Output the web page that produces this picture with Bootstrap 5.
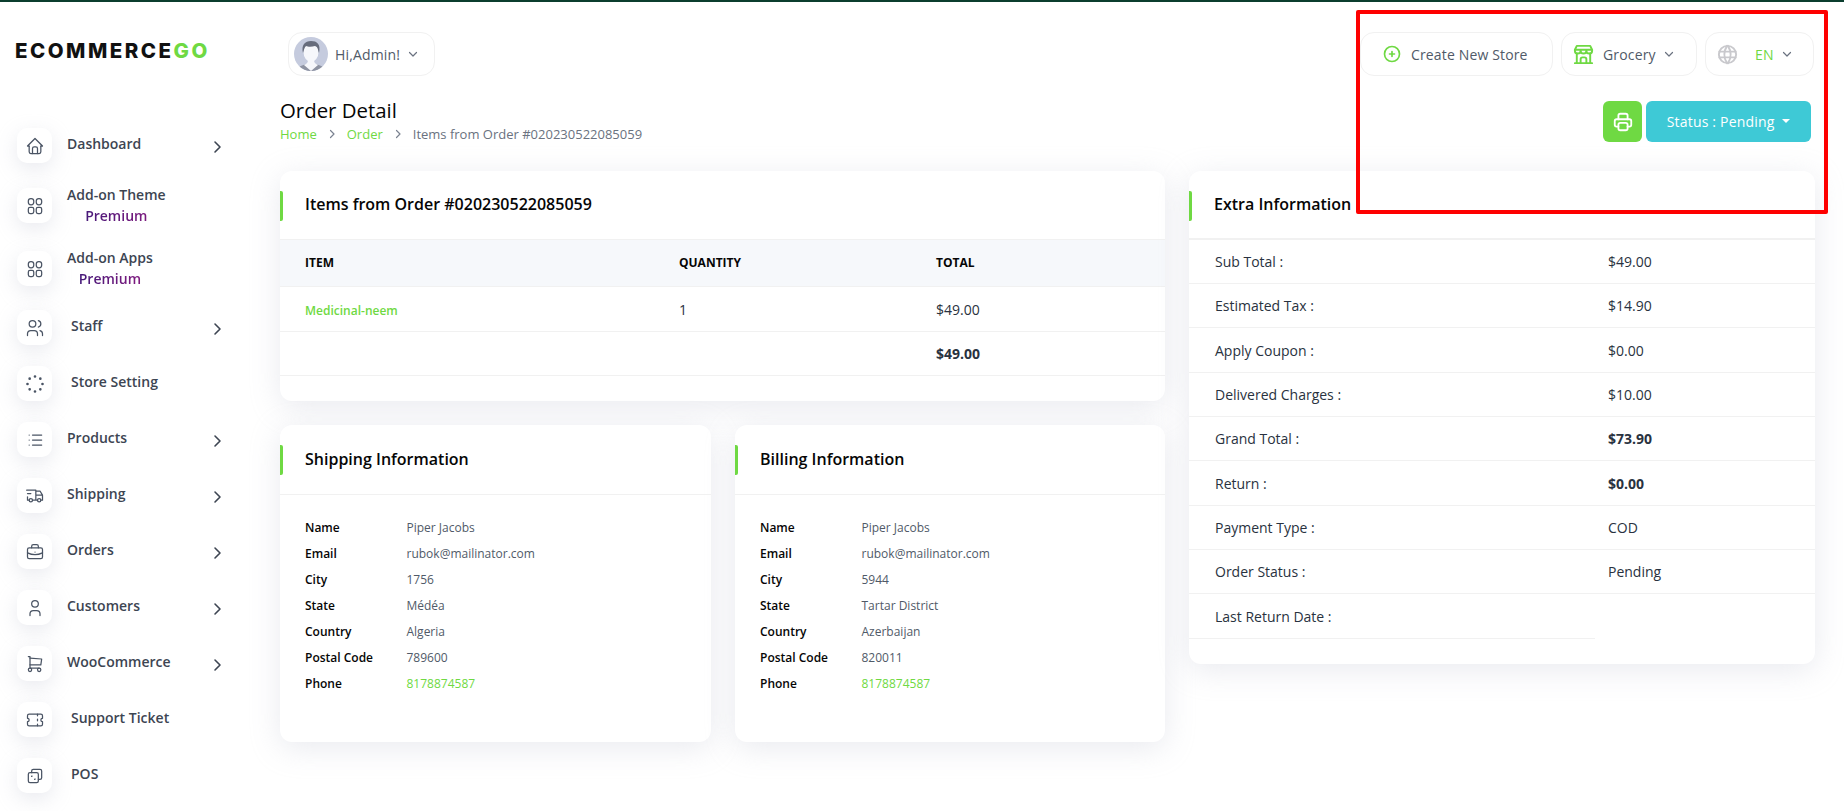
<!doctype html>
<html lang="en">
<head>
<meta charset="utf-8">
<title>Order Detail</title>
<link href="https://cdn.jsdelivr.net/npm/bootstrap@5.3.0/dist/css/bootstrap.min.css" rel="stylesheet">
<style>
html,body{height:811px;overflow:hidden}
body{font-family:"Open Sans",sans-serif;font-size:14px;color:#293240;background:#fff;border-top:2px solid #0b3d2e;position:relative}
svg.ic{fill:none;stroke:currentColor;stroke-width:2;stroke-linecap:round;stroke-linejoin:round;flex:none}
.shell{height:809px}
.side{width:280px;flex:none}
.brand{height:126px;padding:37px 0 0 15px}
.brandtxt{font-family:"Inter",sans-serif;font-weight:800;font-size:20.5px;letter-spacing:2.5px;line-height:24px;color:#111;white-space:nowrap}
.brandtxt b{color:#6fd943;font-weight:800}
.sitem{display:flex;align-items:flex-start;padding-left:17px;color:#3d4552;font-weight:600;font-size:14px;text-decoration:none;height:56px;position:relative}
.sitem.tall1{height:60px}.sitem.tall2{height:59px}
.sitem.tall3{height:63px}
.sicon{width:35px;height:35px;border-radius:10px;background:#fff;box-shadow:0 6px 20px rgba(182,186,203,.3);display:flex;align-items:center;justify-content:center;flex:none;color:#4a5464}
.sicon svg.ic{width:20px;height:20px;stroke-width:1.5}
.sicon svg.ic.dots{stroke-width:3.2}
.slabel{margin-left:15px;line-height:21px;margin-top:5px}
.slabel.mid{margin-left:19px}
.slabel.two{text-align:center;margin-top:-4px}
.prem{display:block;line-height:21px;background:linear-gradient(90deg,#3a1a78,#8a1a80);-webkit-background-clip:text;background-clip:text;color:transparent}
svg.ic.chev{position:absolute;left:212px;top:12px;width:10px;height:14px;color:#3d4552;stroke-width:1.6}
.main{flex:1;min-width:0;padding:30px 29px 0 0}
.pill{height:44px;border:1px solid #f1f1f1;border-radius:14px;background:#fff;display:flex;align-items:center;color:#505a68;font-size:14px;letter-spacing:.15px;text-decoration:none}
.userpill{width:147px;margin-left:8px;padding-left:5px}
.avatar{width:34px;height:34px;flex:none}
.hi{margin-left:7px}
.storepill{width:193px;padding-left:21px}
.grocpill{width:136px;padding-left:10px}
.langpill{width:109px;padding-left:10px}
svg.ic.chevd{width:10px;height:10px;color:#6a7280;stroke-width:1.2}
.rtop{gap:8px;margin-right:1px}
.head2{height:96px;margin-top:-1px;position:relative}
.title{font-size:20.4px;font-weight:500;color:#060606;line-height:27px;margin:0;padding-top:22px}
.crumbs{font-size:13px;line-height:18px;color:#6a7280;margin-top:1px;display:flex;align-items:center}
.crumbs a{color:#6fd943;text-decoration:none}
.crumbs svg.ic{width:10px;height:10px;margin:0 10px;color:#7a8290;stroke-width:1.2}
.btnrow{gap:4px;margin-top:26px}
.bprint{width:39px;height:41px;background:#6fd943;color:#fff;border:0;border-radius:6px;padding:0;display:flex;align-items:center;justify-content:center}
.bprint svg.ic{width:22px;height:22px}
.bstatus{width:165px;height:41px;background:#3ec9d6;color:#fff;border:0;border-radius:6px;font-size:14px;font-weight:500;letter-spacing:.2px;padding:0}
.bstatus::after{margin-left:.55em}
.panel{background:#fff;border:0;border-radius:12px;box-shadow:0 6px 30px rgba(182,186,203,.3)}
.phead{position:relative;padding:0 25px;height:69px;display:flex;align-items:center;border-bottom:1px solid #f1f1f1}
.phead::before{content:"";position:absolute;left:0;top:20px;width:3px;height:30px;background:#6fd943;border-radius:0 2px 2px 0}
.phead h5{font-size:16px;font-weight:600;margin:0;color:#060606}
.thead{display:grid;grid-template-columns:374px 257px 1fr;padding-left:25px;height:47px;align-items:center;background:#f6f8fb;border-bottom:1px solid #f1f1f1;font-size:12px;font-weight:700;color:#060606;text-transform:uppercase}
.trow{display:grid;grid-template-columns:374px 257px 1fr;padding-left:25px;align-items:center;height:45px;border-bottom:1px solid #f1f1f1}
.trow.shorter{height:44px}
.tname{color:#6fd943;font-size:12px;font-weight:600;padding-top:3px}
.tcell{font-size:14px}
.first{width:885px;height:230px}
.addr{width:431px;height:317px}
.addr.billing{width:430px}
.addr .phead{height:70px}
.addrbody{padding:24px 25px 0;font-size:12px}
.arow{display:flex;line-height:18px;margin-bottom:8px}
.arow b{width:101.5px;font-weight:600;color:#060606;flex:none}
.arow span{color:#505a68}
.arow .ph{color:#6fd943}
.extra{width:626px;height:493px;margin-left:24px}
.xrow{display:flex;height:44.35px;align-items:center;border-bottom:1px solid #f1f1f1;font-size:14px}
.xrow .k{width:406px;padding-left:26px;flex:none}
.xrow .v{padding-left:13px}
.xrow.lastx{border-bottom:0}
.xrow.lastx .k{height:100%;display:flex;align-items:center;border-bottom:1px solid #f1f1f1}
.phead.xhead{border-bottom-width:2px;height:68.7px}
.colgap{gap:24px;margin-top:24px}
.redbox{position:absolute;left:1356px;top:8px;width:472px;height:204px;border:4px solid #fe0000;border-radius:2px;pointer-events:none}
.ci{color:#6fd943}
.gi{color:#c9c9cd}
.en{color:#6fd943;margin-left:16px}
.storetxt{margin-left:9px}
</style>
</head>
<body>
<div class="d-flex shell">
  <aside class="side">
    <div class="brand"><div class="brandtxt">ECOMMERCE<b>GO</b></div></div>
    <nav>
      <a class="sitem tall1" href="#"><span class="sicon"><svg class="ic" viewBox="0 0 24 24"><path d="M5 12l-2 0l9 -9l9 9l-2 0"/><path d="M5 12v7a2 2 0 0 0 2 2h10a2 2 0 0 0 2 -2v-7"/><path d="M9 21v-6a2 2 0 0 1 2 -2h2a2 2 0 0 1 2 2v6"/></svg></span><span class="slabel">Dashboard</span><svg class="ic chev" viewBox="0 0 10 14"><path d="M3 2l5 5l-5 5"/></svg></a>
      <a class="sitem tall3" href="#"><span class="sicon"><svg class="ic" viewBox="0 0 24 24"><rect x="4" y="3" width="6.5" height="7.5" rx="3"/><rect x="13.5" y="3" width="6.5" height="7.5" rx="3"/><rect x="4" y="13.5" width="6.5" height="7.5" rx="2"/><rect x="13.5" y="13.5" width="6.5" height="7.5" rx="2"/></svg></span><span class="slabel two">Add-on Theme<span class="prem">Premium</span></span></a>
      <a class="sitem tall2" href="#"><span class="sicon"><svg class="ic" viewBox="0 0 24 24"><rect x="4" y="3" width="6.5" height="7.5" rx="3"/><rect x="13.5" y="3" width="6.5" height="7.5" rx="3"/><rect x="4" y="13.5" width="6.5" height="7.5" rx="2"/><rect x="13.5" y="13.5" width="6.5" height="7.5" rx="2"/></svg></span><span class="slabel two">Add-on Apps<span class="prem">Premium</span></span></a>
      <a class="sitem" href="#"><span class="sicon"><svg class="ic" viewBox="0 0 24 24"><path d="M9 7m-4 0a4 4 0 1 0 8 0a4 4 0 1 0 -8 0"/><path d="M3 21v-2a4 4 0 0 1 4 -4h4a4 4 0 0 1 4 4v2"/><path d="M16 3.13a4 4 0 0 1 0 7.75"/><path d="M21 21v-2a4 4 0 0 0 -3 -3.85"/></svg></span><span class="slabel mid">Staff</span><svg class="ic chev" viewBox="0 0 10 14"><path d="M3 2l5 5l-5 5"/></svg></a>
      <a class="sitem" href="#"><span class="sicon"><svg class="ic dots" viewBox="0 0 24 24"><path d="M12 3v.01M18.4 5.6v.01M21 12v.01M18.4 18.4v.01M12 21v.01M5.6 18.4v.01M3 12v.01M5.6 5.6v.01"/></svg></span><span class="slabel mid">Store Setting</span></a>
      <a class="sitem" href="#"><span class="sicon"><svg class="ic" viewBox="0 0 24 24"><path d="M9 6l11 0M9 12l11 0M9 18l11 0M5 6l0 .01M5 12l0 .01M5 18l0 .01"/></svg></span><span class="slabel">Products</span><svg class="ic chev" viewBox="0 0 10 14"><path d="M3 2l5 5l-5 5"/></svg></a>
      <a class="sitem" href="#"><span class="sicon"><svg class="ic" viewBox="0 0 24 24"><path d="M7 17m-2 0a2 2 0 1 0 4 0a2 2 0 1 0 -4 0"/><path d="M17 17m-2 0a2 2 0 1 0 4 0a2 2 0 1 0 -4 0"/><path d="M5 17h-2v-4m-1 -8h11v12m-4 0h6m4 0h2v-6h-8m0 -5h5l3 5"/><path d="M3 9l4 0"/></svg></span><span class="slabel">Shipping</span><svg class="ic chev" viewBox="0 0 10 14"><path d="M3 2l5 5l-5 5"/></svg></a>
      <a class="sitem" href="#"><span class="sicon"><svg class="ic" viewBox="0 0 24 24"><path d="M3 9a2 2 0 0 1 2 -2h14a2 2 0 0 1 2 2v9a2 2 0 0 1 -2 2h-14a2 2 0 0 1 -2 -2z"/><path d="M8 7v-2a2 2 0 0 1 2 -2h4a2 2 0 0 1 2 2v2"/><path d="M12 12l0 .01"/><path d="M3 13a20 20 0 0 0 18 0"/></svg></span><span class="slabel">Orders</span><svg class="ic chev" viewBox="0 0 10 14"><path d="M3 2l5 5l-5 5"/></svg></a>
      <a class="sitem" href="#"><span class="sicon"><svg class="ic" viewBox="0 0 24 24"><path d="M8 7a4 4 0 1 0 8 0a4 4 0 0 0 -8 0"/><path d="M6 21v-2a4 4 0 0 1 4 -4h4a4 4 0 0 1 4 4v2"/></svg></span><span class="slabel">Customers</span><svg class="ic chev" viewBox="0 0 10 14"><path d="M3 2l5 5l-5 5"/></svg></a>
      <a class="sitem" href="#"><span class="sicon"><svg class="ic" viewBox="0 0 24 24"><path d="M6 19m-2 0a2 2 0 1 0 4 0a2 2 0 1 0 -4 0"/><path d="M17 19m-2 0a2 2 0 1 0 4 0a2 2 0 1 0 -4 0"/><path d="M17 17h-11v-14h-2"/><path d="M6 5l14 1l-1 7h-13"/></svg></span><span class="slabel">WooCommerce</span><svg class="ic chev" viewBox="0 0 10 14"><path d="M3 2l5 5l-5 5"/></svg></a>
      <a class="sitem" href="#"><span class="sicon"><svg class="ic" viewBox="0 0 24 24"><path d="M15 5l0 2M15 11l0 2M15 17l0 2"/><path d="M5 5h14a2 2 0 0 1 2 2v3a2 2 0 0 0 0 4v3a2 2 0 0 1 -2 2h-14a2 2 0 0 1 -2 -2v-3a2 2 0 0 0 0 -4v-3a2 2 0 0 1 2 -2"/></svg></span><span class="slabel mid">Support Ticket</span></a>
      <a class="sitem" href="#"><span class="sicon"><svg class="ic" viewBox="0 0 24 24"><path d="M8 8V6a2 2 0 0 1 2 -2h8a2 2 0 0 1 2 2v8a2 2 0 0 1 -2 2h-2"/><rect x="4" y="8" width="12" height="12" rx="2"/><path d="M8 12h.5M8 12v.5M12 16h-.5M12 16v-.5"/></svg></span><span class="slabel mid">POS</span></a>
    </nav>
  </aside>
  <main class="main">
    <div class="d-flex justify-content-between">
      <a class="pill userpill" href="#">
        <svg class="avatar" viewBox="0 0 34 34"><defs><clipPath id="av"><circle cx="17" cy="17" r="17"/></clipPath></defs><g clip-path="url(#av)"><rect width="34" height="34" fill="#c5cbde"/><path d="M3 34c1-5 6-7 14-7s13 2 14 7z" fill="#8e93a2"/><path d="M10 28c3-1 4-3 4-5h6c0 2 1 4 4 5l-7 6z" fill="#f6f7fb"/><ellipse cx="17" cy="15" rx="7.5" ry="10" fill="#f6f7fb"/><path d="M9 16c-2-8 2-12 8-12s10 3 8 12c-1-3-1-6-4-7-3 1-7 1-9 0-2 2-2 4-3 7z" fill="#676c7c"/></g></svg>
        <span class="hi">Hi,Admin!</span>
        <svg class="ic chevd ms-2" viewBox="0 0 10 10"><path d="M1.5 3.5l3.5 3.5l3.5-3.5"/></svg>
      </a>
      <div class="d-flex rtop">
        <a class="pill storepill" href="#"><svg class="ic ci" width="20" height="20" viewBox="0 0 24 24"><path d="M3 12a9 9 0 1 0 18 0a9 9 0 0 0 -18 0"/><path d="M9 12h6M12 9v6"/></svg><span class="storetxt">Create New Store</span></a>
        <a class="pill grocpill" href="#"><svg class="ic ci" width="23" height="23" viewBox="0 0 24 24"><path d="M3 21l18 0"/><path d="M3 7v1a3 3 0 0 0 6 0v-1m0 1a3 3 0 0 0 6 0v-1m0 1a3 3 0 0 0 6 0v-1h-18l2 -4h14l2 4"/><path d="M5 21l0 -10.15M19 21l0 -10.15"/><path d="M9 21v-4a2 2 0 0 1 2 -2h2a2 2 0 0 1 2 2v4"/></svg><span class="ms-2">Grocery</span><svg class="ic chevd ms-2" viewBox="0 0 10 10"><path d="M1.5 3.5l3.5 3.5l3.5-3.5"/></svg></a>
        <a class="pill langpill" href="#"><svg class="ic gi" width="23" height="23" viewBox="0 0 24 24"><path d="M3 12a9 9 0 1 0 18 0a9 9 0 0 0 -18 0"/><path d="M3.6 9h16.8M3.6 15h16.8"/><path d="M11.5 3a17 17 0 0 0 0 18"/><path d="M12.5 3a17 17 0 0 1 0 18"/></svg><span class="en">EN</span><svg class="ic chevd ms-2" viewBox="0 0 10 10"><path d="M1.5 3.5l3.5 3.5l3.5-3.5"/></svg></a>
      </div>
    </div>
    <div class="d-flex justify-content-between head2">
      <div>
        <h1 class="title">Order Detail</h1>
        <div class="crumbs"><a href="#">Home</a><svg class="ic" viewBox="0 0 10 10"><path d="M3.5 1.5l3.5 3.5l-3.5 3.5"/></svg><a href="#">Order</a><svg class="ic" viewBox="0 0 10 10"><path d="M3.5 1.5l3.5 3.5l-3.5 3.5"/></svg><span>Items from Order #020230522085059</span></div>
      </div>
      <div class="d-flex btnrow pe-1">
        <button class="bprint"><svg class="ic" viewBox="0 0 24 24"><path d="M17 17h2a2 2 0 0 0 2 -2v-4a2 2 0 0 0 -2 -2h-14a2 2 0 0 0 -2 2v4a2 2 0 0 0 2 2h2"/><path d="M17 9v-4a2 2 0 0 0 -2 -2h-6a2 2 0 0 0 -2 2v4"/><path d="M7 15a2 2 0 0 1 2 -2h6a2 2 0 0 1 2 2v4a2 2 0 0 1 -2 2h-6a2 2 0 0 1 -2 -2z"/></svg></button>
        <button class="bstatus dropdown-toggle">Status : Pending</button>
      </div>
    </div>
    <div class="d-flex">
      <div>
        <section class="panel first">
          <div class="phead"><h5>Items from Order #020230522085059</h5></div>
          <div class="thead"><span>Item</span><span>Quantity</span><span>Total</span></div>
          <div class="trow"><span class="tname">Medicinal-neem</span><span class="tcell">1</span><span class="tcell">$49.00</span></div>
          <div class="trow shorter"><span></span><span></span><span class="tcell fw-bold">$49.00</span></div>
        </section>
        <div class="d-flex colgap">
          <section class="panel addr">
            <div class="phead"><h5>Shipping Information</h5></div>
            <div class="addrbody">
              <div class="arow"><b>Name</b><span>Piper Jacobs</span></div>
              <div class="arow"><b>Email</b><span>rubok@mailinator.com</span></div>
              <div class="arow"><b>City</b><span>1756</span></div>
              <div class="arow"><b>State</b><span>Médéa</span></div>
              <div class="arow"><b>Country</b><span>Algeria</span></div>
              <div class="arow"><b>Postal Code</b><span>789600</span></div>
              <div class="arow"><b>Phone</b><span class="ph">8178874587</span></div>
            </div>
          </section>
          <section class="panel addr billing">
            <div class="phead"><h5>Billing Information</h5></div>
            <div class="addrbody">
              <div class="arow"><b>Name</b><span>Piper Jacobs</span></div>
              <div class="arow"><b>Email</b><span>rubok@mailinator.com</span></div>
              <div class="arow"><b>City</b><span>5944</span></div>
              <div class="arow"><b>State</b><span>Tartar District</span></div>
              <div class="arow"><b>Country</b><span>Azerbaijan</span></div>
              <div class="arow"><b>Postal Code</b><span>820011</span></div>
              <div class="arow"><b>Phone</b><span class="ph">8178874587</span></div>
            </div>
          </section>
        </div>
      </div>
      <section class="panel extra">
        <div class="phead xhead"><h5>Extra Information</h5></div>
        <div class="xrow"><span class="k">Sub Total :</span><span class="v">$49.00</span></div>
        <div class="xrow"><span class="k">Estimated Tax :</span><span class="v">$14.90</span></div>
        <div class="xrow"><span class="k">Apply Coupon :</span><span class="v">$0.00</span></div>
        <div class="xrow"><span class="k">Delivered Charges :</span><span class="v">$10.00</span></div>
        <div class="xrow"><span class="k">Grand Total :</span><span class="v fw-bold">$73.90</span></div>
        <div class="xrow"><span class="k">Return :</span><span class="v fw-bold">$0.00</span></div>
        <div class="xrow"><span class="k">Payment Type :</span><span class="v">COD</span></div>
        <div class="xrow"><span class="k">Order Status :</span><span class="v">Pending</span></div>
        <div class="xrow lastx"><span class="k">Last Return Date :</span></div>
      </section>
    </div>
  </main>
</div>
<div class="redbox"></div>
<script src="https://cdn.jsdelivr.net/npm/bootstrap@5.3.0/dist/js/bootstrap.bundle.min.js"></script>
</body>
</html>
